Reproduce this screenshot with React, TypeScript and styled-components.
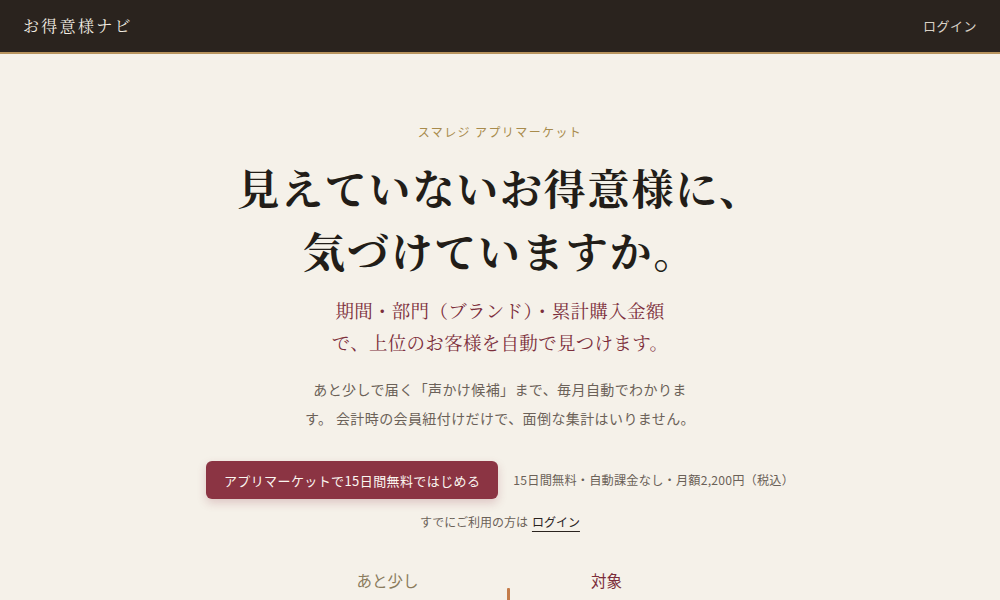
import React from 'react'
import styled, { createGlobalStyle } from 'styled-components'

const GlobalStyle = createGlobalStyle`
  html, body {
    margin: 0;
    padding: 0;
    background: #f5f1e9;
  }
  body {
    font-family: "Noto Sans CJK JP", "Noto Sans", sans-serif;
    color: #2a231e;
  }
  * { box-sizing: border-box; }
`

const serif = `"Noto Serif CJK JP", "Noto Serif JP", "Noto Sans CJK JP", serif`

const Header = styled.header`
  height: 54px;
  background: #2a231e;
  border-bottom: 2px solid #b8945e;
  display: flex;
  align-items: center;
  justify-content: space-between;
  padding: 0 23px;
`

const Brand = styled.div`
  font-family: ${serif};
  font-size: 16px;
  letter-spacing: 2.3px;
  color: #f2ede3;
  margin-top: -2px;
`

const HeaderLink = styled.a`
  font-size: 13px;
  color: #d9d2c7;
  letter-spacing: 0.5px;
  text-decoration: none;
  margin-top: -2px;
`

const Hero = styled.main`
  display: flex;
  flex-direction: column;
  align-items: center;
  padding-top: 69px;
`

const Eyebrow = styled.div`
  font-size: 12px;
  letter-spacing: 1.4px;
  color: #a88b4c;
  line-height: 18px;
`

const Headline = styled.h1`
  margin: 15px 0 0;
  font-family: ${serif};
  font-weight: 700;
  font-size: 42px;
  letter-spacing: 1.8px;
  line-height: 63px;
  text-align: center;
  color: #221d18;
`

const Lead = styled.p`
  margin: 12px 0 0;
  font-family: ${serif};
  font-size: 18.5px;
  line-height: 32px;
  letter-spacing: 0.3px;
  text-align: center;
  color: #7c2e3b;
`

const Body = styled.p`
  margin: 17px 0 0;
  max-width: 396px;
  font-size: 14px;
  line-height: 29px;
  letter-spacing: 0.4px;
  text-align: center;
  color: #6b6158;
`

const CtaRow = styled.div`
  margin-top: 28px;
  display: flex;
  align-items: center;
  gap: 15px;
`

const CtaButton = styled.button`
  height: 38px;
  padding: 0 18px;
  border: none;
  border-radius: 6px;
  background: #8b3443;
  color: #fbf6f0;
  font-family: inherit;
  font-size: 13px;
  letter-spacing: 0.4px;
  box-shadow: 0 4px 10px rgba(139, 52, 67, 0.22);
  cursor: pointer;
`

const Note = styled.span`
  font-size: 12.2px;
  color: #6b6158;
  letter-spacing: 0.2px;
`

const LoginLine = styled.div`
  margin-top: 14px;
  font-size: 12px;
  color: #6b6158;
  display: flex;
  gap: 4px;
  align-items: baseline;
`

const LoginLink = styled.a`
  color: #2a231e;
  text-decoration: underline;
  text-underline-offset: 4px;
  text-decoration-thickness: 1px;
`

const Compare = styled.div`
  margin-top: 39px;
  width: 399px;
  display: grid;
  grid-template-columns: 180px 1fr 180px;
  transform: translateX(-3px);
`

const ColLabel = styled.div<{ $tone: 'muted' | 'accent' }>`
  text-align: center;
  font-size: 15.5px;
  line-height: 22px;
  color: ${(p) => (p.$tone === 'accent' ? '#7c2e3b' : '#8a7b5c')};
`

const Marker = styled.div`
  justify-self: end;
  margin-right: 7px;
  margin-top: 19px;
  width: 3px;
  height: 14px;
  background: #c47c4a;
  border-radius: 1px;
`

export default function App() {
  return (
    <>
      <GlobalStyle />
      <Header>
        <Brand>お得意様ナビ</Brand>
        <HeaderLink href="#">ログイン</HeaderLink>
      </Header>
      <Hero>
        <Eyebrow>スマレジ アプリマーケット</Eyebrow>
        <Headline>
          見えていないお得意様に、
          <br />
          気づけていますか。
        </Headline>
        <Lead>
          期間・部門（ブランド）・累計購入金額
          <br />
          で、上位のお客様を自動で見つけます。
        </Lead>
        <Body>
          あと少しで届く「声かけ候補」まで、毎月自動でわかります。
          会計時の会員紐付けだけで、面倒な集計はいりません。
        </Body>
        <CtaRow>
          <CtaButton>アプリマーケットで15日間無料ではじめる</CtaButton>
          <Note>15日間無料・自動課金なし・月額2,200円（税込）</Note>
        </CtaRow>
        <LoginLine>
          すでにご利用の方は <LoginLink href="#">ログイン</LoginLink>
        </LoginLine>
        <Compare>
          <ColLabel $tone="muted">あと少し</ColLabel>
          <Marker />
          <ColLabel $tone="accent">対象</ColLabel>
        </Compare>
      </Hero>
    </>
  )
}
